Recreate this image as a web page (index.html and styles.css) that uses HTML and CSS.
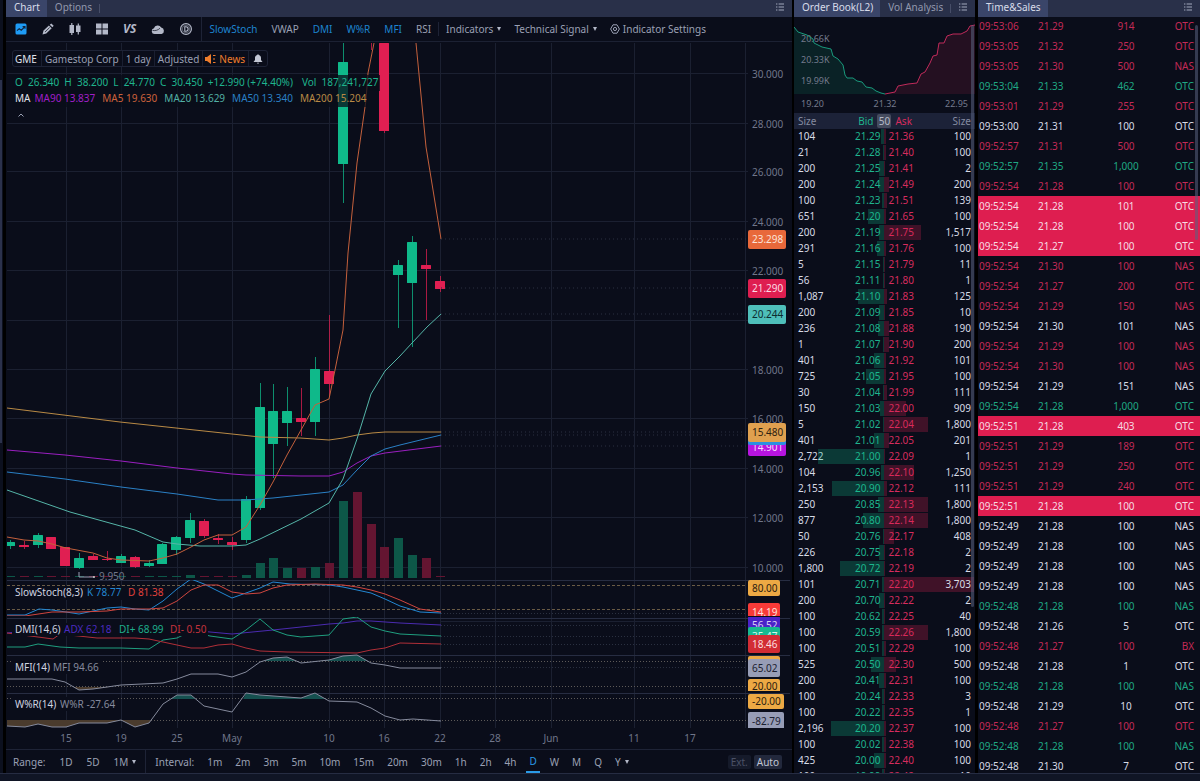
FILE: index.html
```html
<!DOCTYPE html>
<html lang="en">
<head>
<meta charset="utf-8">
<title>GME - Chart</title>
<link rel="stylesheet" href="styles.css">
</head>
<body>
<div class="app">
  <div class="rail"><span class="rail-thumb"></span></div>

  <main class="panel chart-panel">
    <nav class="tabs">
      <button class="tab active">Chart</button>
      <button class="tab">Options</button>
      <span class="tab-sep"></span>
      <button class="list-btn" aria-label="Menu"><svg viewBox="0 0 8 8"><path d="M0 1h1.4M0 4h1.4M0 7h1.4M2.6 1H8M2.6 4H8M2.6 7H8"/></svg></button>
    </nav>

    <div class="toolbar">
      <div class="tools">
        <button aria-label="Chart style"><svg viewBox="0 0 12 12"><rect x=".5" y=".5" width="11" height="11" rx="1.5" fill="#1e9bf5"/><path d="M2 7.6l2.2-2 2 1.6 3.6-3.4M7.6 3.6h2.4v2.2" stroke="#10243d" fill="none" stroke-width="1.1"/></svg></button>
        <button aria-label="Draw"><svg viewBox="0 0 12 12"><path d="M.5 11.500l1-4 5.400-5 2.800 2.700L4.300 10.600zM7.700 1.800L9.300.4l2.400 2.300-1.300 1.500z" fill="#b3b8c8"/><path d="M3 9l4.600-4.500" stroke="#0a0d1a" stroke-width=".7"/></svg></button>
        <button aria-label="Candles"><svg viewBox="0 0 12 12"><path d="M.5 2h4.500v8H.5zM2.200 0h1.200v12H2.200zM7 2.500h4.500v6.500H7zM8.700 .5h1.200v11H8.700z" fill="#b3b8c8"/></svg></button>
        <button aria-label="Layout"><svg viewBox="0 0 12 12"><path d="M0 .5h5.500v5H0zM6.500 .5H12v5H6.500zM0 6.500h5.500v5H0zM6.500 6.500H12v5H6.500z" fill="#b3b8c8"/></svg></button>
        <button class="vs">VS</button>
        <button class="cloud" aria-label="Cloud"><svg viewBox="0 0 14 12"><path d="M3.500 11a2.900 2.900 0 0 1-.6-5.700A4 4 0 0 1 10.200 4.600 3.300 3.300 0 0 1 10.600 11z" fill="#b3b8c8"/><path d="M1.500 7.400c3 .6 5.500-.2 7.500-2.200" stroke="#0a0d1a" fill="none" stroke-width=".7"/></svg></button>
        <button aria-label="Dividends"><svg viewBox="0 0 12 12" fill="none" stroke="#b3b8c8"><circle cx="6" cy="6" r="5.400" stroke-width="1.200"/><circle cx="6" cy="6" r="3.800" stroke-width=".5"/><path d="M4.800 3.800v4.400h1.100a2.200 2.200 0 0 0 0-4.400z" stroke-width="1.100"/></svg></button>
      </div>
      <div class="quick">
        <button class="on">SlowStoch</button><button>VWAP</button><button class="on">DMI</button><button class="on">W%R</button><button class="on">MFI</button><button>RSI</button>
      </div>
      <div class="menus">
        <button>Indicators<i class="caret"></i></button>
        <button>Technical Signal<i class="caret"></i></button>
        <button class="settings"><svg viewBox="0 0 10 10" fill="none" stroke="#9aa0b4"><path d="M3 .8h4L9.400 5 7 9.200H3L.6 5z"/><circle cx="5" cy="5" r="1.600"/></svg>Indicator Settings</button>
      </div>
    </div>

    <div class="chart">
      <svg class="plot" id="plot" viewBox="6 42 786 707" preserveAspectRatio="xMinYMin meet" role="img" aria-label="GME daily chart">
        <defs>
          <clipPath id="c-main"><rect x="7" y="43" width="785" height="537"/></clipPath>
          <clipPath id="c-k"><rect x="7" y="580" width="785" height="36"/></clipPath>
          <clipPath id="c-dmi"><rect x="7" y="617" width="785" height="38"/></clipPath>
          <clipPath id="c-mfi"><rect x="7" y="655" width="785" height="36"/></clipPath>
          <clipPath id="c-wr"><rect x="7" y="692" width="785" height="36"/></clipPath>
          <clipPath id="above-mfi"><rect x="7" y="655" width="440" height="6"/></clipPath>
          <clipPath id="below-mfi"><rect x="7" y="687" width="440" height="6"/></clipPath>
          <clipPath id="above-wr"><rect x="7" y="692" width="440" height="7"/></clipPath>
          <clipPath id="below-wr"><rect x="7" y="720" width="440" height="9"/></clipPath>
        </defs>
        <g id="grid" class="grid"></g>
        <g clip-path="url(#c-main)">
          <g id="volume"></g>
          <g id="candles"></g>
          <g class="lines">
            <polyline stroke="#b98a45" points="7,408 120,422 232,434 260,437 300,438 329,440 343,438 357,435 372,433 385,432 441,432"/>
            <polyline stroke="#9a1fc0" points="7,450 65,455 121,461 177,468 232,474 246,475 301,476 329,476 343,472 357,463 371,456 385,453 441,446"/>
            <polyline stroke="#2a80c5" points="7,472 65,479 121,487 177,494 218,500 246,500 273,498 301,495 329,492 343,485 357,470 371,456 385,449 400,445 441,435"/>
            <polyline stroke="#55b5a8" points="7,490 70,512 135,530 163,542 177,544 200,546 232,546 246,545 260,539 301,519 329,503 343,479 357,439 371,394 385,371 400,356 412,343 427,327 441,314"/>
            <polyline stroke="#c4603c" points="7,537 24,540 38,541 52,544 66,548 93,553 107,558 121,560 149,561 163,558 177,554 191,547 204,540 218,535 232,535 246,527 260,505 273,482 287,455 301,430 315,405 329,399 335,370 343,330 348,253 357,163 366,100 368,73 374,43"/>
            <polyline stroke="#c4603c" points="416,43 426,147 441,239"/>
            <path d="M79 572v5h15" stroke="#9aa0b4"/><circle cx="94" cy="577" r="1" fill="#ccc"/>
          </g>
          <text x="99" y="580" class="axis">9.950</text>
        </g>
        <g class="guides">
          <path d="M441 239H746M441 288H746M441 314H746M441 432H746M441 435H746M441 446H746" stroke="#2a3040" stroke-dasharray="1 3"/>
          <path d="M7 585.500H746M7 609.500H746" stroke="#6a5b45" stroke-dasharray="3 2"/>
          <path d="M7 661.500H746M7 686.500H746M7 698.500H746M7 720.500H746" stroke="#5d5a58" stroke-dasharray="1 2"/>
          <path d="M441 613.500H746M441 625.500H746M441 636.500H746M441 644.500H746M441 667.500H746" stroke="#2a3040" stroke-dasharray="1 2"/>
        </g>
        <g class="lines" clip-path="url(#c-k)">
          <polyline stroke="#2387d2" points="7,615 25,615 39,609 52,610 66,612 79,614 93,611 107,608 121,607 135,609 149,610 163,601 177,589 191,579 204,584 232,598 246,593 260,588 273,582 290,584 329,585 343,587 357,590 371,593 385,599 400,606 420,612 441,613"/>
          <polyline stroke="#d0463f" points="7,616 25,616 52,612 79,612 107,611 121,609 149,609 163,608 177,601 191,590 204,585 218,585 232,592 246,594 260,593 273,588 287,585 315,584 343,585 357,587 371,590 385,594 400,600 420,609 441,612"/>
        </g>
        <g class="lines" clip-path="url(#c-dmi)">
          <polyline stroke="#4a2bb0" points="7,633 60,627 140,625 210,632 232,634 273,630 301,627 329,624 343,623 357,621 371,621 400,623 441,625"/>
          <polyline stroke="#1f9e7f" points="7,647 25,647 38,644 60,647 79,648 121,648 149,649 163,640 177,638 191,631 210,636 232,639 246,630 260,619 273,630 287,635 301,637 329,635 343,619 357,617 371,627 385,631 400,634 441,636"/>
          <polyline stroke="#b02f38" points="7,633 38,637 53,639 60,634 97,638 135,638 149,639 177,645 191,648 204,648 218,645 232,644 246,648 260,651 287,652 357,653 371,650 385,648 400,643 441,644"/>
        </g>
        <g clip-path="url(#above-mfi)"><polygon class="fill-hi" points="7,691 260,662 273,658 287,657 301,663 329,660 343,656 357,655 371,663 441,691"/></g>
        <g clip-path="url(#below-mfi)"><polygon class="fill-lo" points="72,686 79,690 93,689 118,686"/></g>
        <g clip-path="url(#above-wr)"><polygon class="fill-hi" points="163,704 177,695 191,695 204,706 240,706 246,693 260,695 301,698 315,693 329,701"/></g>
        <g clip-path="url(#below-wr)"><polygon class="fill-lo" points="7,720 7,726 25,727 38,724 52,727 66,727 79,723 107,723 121,720 135,727 149,723 151,720"/></g>
        <g class="lines">
          <polyline stroke="#858a9c" points="7,679 52,679 65,682 79,690 93,689 121,685 163,683 177,679 191,674 218,674 232,677 246,672 260,662 273,658 287,657 301,663 329,660 343,656 357,655 371,663 385,665 400,668 441,668"/>
          <polyline stroke="#858a9c" points="7,726 25,727 38,724 52,727 66,727 79,723 107,723 121,720 135,727 149,723 163,704 177,695 191,695 204,706 232,712 246,693 260,695 301,698 315,693 329,701 357,702 371,708 385,716 400,720 413,719 441,721"/>
        </g>
        <g class="names">
          <rect x="12" y="586" width="152" height="14"/><rect x="12" y="623" width="196" height="13"/><rect x="12" y="660" width="90" height="14"/><rect x="12" y="697" width="104" height="14"/>
          <text x="15" y="596">SlowStoch(8,3)</text><text x="87" y="596" fill="#2387d2">K 78.77</text><text x="128" y="596" fill="#e0413c">D 81.38</text>
          <text x="15" y="633">DMI(14,6)</text><text x="64" y="633" fill="#4a2bc0">ADX 62.18</text><text x="119" y="633" fill="#1fae8b">DI+ 68.99</text><text x="170" y="633" fill="#c4323c">DI- 0.50</text>
          <text x="15" y="671">MFI(14)</text><text x="53" y="671" fill="#858a9c">MFI 94.66</text>
          <text x="15" y="708">W%R(14)</text><text x="60" y="708" fill="#858a9c">W%R -27.64</text>
        </g>
        <g id="labels" class="axis"></g>
        <g id="tags" class="tags"></g>
      </svg>

      <div class="legend">
        <div class="symbol">
          <span class="tick">GME</span><span>Gamestop Corp</span><span>1 day</span><span>Adjusted</span>
          <span class="news"><svg viewBox="0 0 12 10"><path d="M0 3h2l4-3v10L2 7H0z" fill="#ee7d2c"/><path d="M8 1.500h2.500M8 5h2M8 8.500h2.500" stroke="#ee7d2c" stroke-width="1"/></svg>News</span>
          <span class="bell"><svg viewBox="0 0 10 10"><path d="M5 0l.8.9C7.500 1.300 8 2.600 8 4v2l1.500 2h-9L2 6V4c0-1.400.5-2.700 2.200-3.100zM3.800 8.700h2.400L5 10z" fill="#c3c7d4"/></svg></span>
        </div>
        <div class="values up"><span>O&nbsp; 26.340</span><span>H&nbsp; 38.200</span><span>L&nbsp; 24.770</span><span>C&nbsp; 30.450</span><span>+12.990 (+74.40%)</span><span class="vol">Vol&nbsp; 187,241,727</span></div>
        <div class="values ma"><b>MA</b><span class="m90">MA90 13.837</span><span class="m5">MA5 19.630</span><span class="m20">MA20 13.629</span><span class="m50">MA50 13.340</span><span class="m200">MA200 15.204</span></div>
        <button class="fold" aria-label="Collapse"><svg viewBox="0 0 6 4"><path d="M.5 3.500L3 1l2.500 2.500" fill="none" stroke="#9aa0b4"/></svg></button>
      </div>
    </div>

    <div class="ranges">
      <div class="group first"><span>Range:</span><button>1D</button><button>5D</button><button>1M<i class="caret"></i></button></div>
      <div class="group"><span>Interval:</span><button>1m</button><button>2m</button><button>3m</button><button>5m</button><button>10m</button><button>15m</button><button>20m</button><button>30m</button><button>1h</button><button>2h</button><button>4h</button><button class="current">D</button><button>W</button><button>M</button><button>Q</button><button>Y<i class="caret"></i></button></div>
      <div class="modes"><button class="dim">Ext.</button><button>Auto</button></div>
    </div>
  </main>

  <section class="panel book">
    <nav class="tabs">
      <button class="tab active">Order Book(L2)</button>
      <button class="tab">Vol Analysis</button>
      <span class="tab-sep"></span>
      <button class="list-btn" aria-label="Menu"><svg viewBox="0 0 8 8"><path d="M0 1h1.400M0 4h1.400M0 7h1.400M2.600 1H8M2.600 4H8M2.600 7H8"/></svg></button>
    </nav>
    <svg class="depth" viewBox="794 17 181 96" role="img" aria-label="Depth">
      <polygon fill="#0a2226" points="794,94 794,27 798,32 807,35 813,39 814,43 822,47 831,49 833,56 838,59 843,65 845,75 847,78 853,78 857,81 862,82 866,87 872,88 876,91 881,93 885,94"/>
      <polygon fill="#241021" points="885,94 895,92 898,86 908,84 917,83 921,74 925,72 930,63 933,56 937,55 939,43 944,43 947,36 953,34 961,34 967,31 970,26 975,25 975,94"/>
      <g class="depth-text"><text x="801" y="42">20.66K</text><text x="801" y="63">20.33K</text><text x="801" y="84">19.99K</text><text x="801" y="107">19.20</text><text x="885" y="107" text-anchor="middle">21.32</text><text x="968" y="107" text-anchor="end">22.95</text></g>
      <polyline fill="none" stroke="#19997c" points="794,27 798,32 807,35 813,39 814,43 822,47 831,49 833,56 838,59 843,65 845,75 847,78 853,78 857,81 862,82 866,87 872,88 876,91 881,93 885,94"/>
      <polyline fill="none" stroke="#c02a5a" points="885,94 895,92 898,86 908,84 917,83 921,74 925,72 930,63 933,56 937,55 939,43 944,43 947,36 953,34 961,34 967,31 970,26 975,25"/>
    </svg>
    <div class="scroll">
      <table class="orders">
        <thead><tr><th class="size">Size</th><th class="bid">Bid</th><th class="ask"><span class="count">50</span>Ask</th><th class="size-r">Size</th></tr></thead>
        <tbody id="orders"></tbody>
      </table>
    </div>
    <span class="thumb"></span>
  </section>

  <section class="panel sales">
    <nav class="tabs">
      <button class="tab active">Time&amp;Sales</button>
      <button class="list-btn" aria-label="Menu"><svg viewBox="0 0 8 8"><path d="M0 1h1.400M0 4h1.400M0 7h1.400M2.600 1H8M2.600 4H8M2.600 7H8"/></svg></button>
    </nav>
    <div class="scroll"><table class="prints"><tbody id="prints"></tbody></table></div>
    <span class="thumb"></span>
  </section>

  <footer class="status"></footer>
</div>
<script src="data.js"></script>
</body>
</html>
```
FILE: styles.css
```css
* { box-sizing: border-box; }
body { margin: 0; background: #000; color: #d8dbe6; font: 10px/14px "Noto Sans", sans-serif; }
button { margin: 0; padding: 0; border: 0; background: none; color: inherit; font: inherit; white-space: nowrap; cursor: pointer; }
svg { display: block; }

.app { display: grid; grid-template-columns: 6px minmax(0, 788fr) minmax(0, 184fr) minmax(0, 222fr); grid-template-rows: minmax(0, 1fr) 8px; height: 100vh; overflow: hidden; }
.panel { position: relative; display: flex; flex-direction: column; min-height: 0; background: #0a0d1a; }
.rail { padding-top: 80px; border-right: 3px solid #000; background: #0c101e; }
.rail-thumb { display: block; width: 2px; height: 363px; background: #2b314b; }
.status { grid-column: 1 / -1; border-top: 1px solid #262c42; background: #101525; }

.tabs { display: flex; align-items: center; flex: none; height: 17px; overflow: hidden; background: #293049; color: #9298ad; }
.tab { height: 17px; padding: 0 7px 3px 8px; line-height: 14px; }
.tab.active { background: #3a4569; color: #d8dcea; }
.tab-sep { width: 1px; height: 9px; background: #474e68; }
.list-btn { margin-left: auto; padding: 0 8px 3px 0; }
.list-btn svg { width: 8px; height: 8px; stroke: #a2a8bd; }

.chart-panel { border-right: 2px solid #000; }
.toolbar { display: flex; align-items: center; flex: none; height: 25px; border-bottom: 1px solid #1c2133; color: #9aa0b4; }
.tools { display: flex; align-items: center; gap: 15px; height: 24px; padding: 0 9px; border-right: 1px solid #1e2336; }
.tools svg { width: 12px; height: 12px; }
.tools .cloud svg { width: 14px; }
.tools .vs { font-weight: 700; font-style: italic; font-size: 12px; color: #b3b8c8; }
.quick { display: flex; gap: 14px; padding: 0 7px; border-right: 1px solid #1e2336; }
.quick .on { color: #1d84cf; }
.menus { display: flex; gap: 13px; padding-left: 7px; }
.menus button { display: flex; align-items: center; }
.caret { display: inline-block; margin-left: 4px; border: 2px solid transparent; border-top: 4px solid #b3b8c8; border-bottom: 0; vertical-align: 2px; }
.settings svg { width: 10px; height: 10px; margin-right: 3px; }

.chart { position: relative; flex: 1; min-height: 0; overflow: hidden; }
.plot { width: 100%; }
.plot text { font-family: "Noto Sans", sans-serif; font-size: 10px; }
.plot .axis { fill: #70768a; }
.grid { stroke: #1b2031; }
.grid .split { stroke: #272d42; }
.lines { fill: none; stroke-width: 1; }
.guides { fill: none; }
.names rect { fill: #0a0d1a; }
.names { fill: #d0d4e0; }
.fill-hi { fill: #15504f; }
.fill-lo { fill: #4a3b2d; }

.legend { position: absolute; top: 8px; left: 6px; display: flex; flex-direction: column; align-items: flex-start; }
.symbol { display: flex; height: 17px; margin-bottom: 8px; border: 1px solid #1e2336; border-radius: 3px; background: #0a0d1a; color: #9aa0b4; }
.symbol > span { display: flex; align-items: center; padding: 0 3px; border-left: 1px solid #1a1f31; }
.symbol > .tick { padding: 0 4px 0 2px; border-left: 0; color: #e0e3ec; }
.symbol > .news { padding-left: 2px; color: #ee7d2c; }
.symbol .news svg { width: 12px; height: 10px; margin-right: 2px; }
.symbol > .bell { padding: 0 4px; }
.symbol .bell svg { width: 10px; height: 10px; }
.values { display: flex; gap: 5px; height: 16px; padding: 0 2px 0 3px; background: rgba(10, 13, 26, .75); white-space: nowrap; }
.up { color: #1fb48e; }
.vol { margin-left: 4px; }
.ma { gap: 7px; }
.ma b { margin-right: -3px; font-weight: 400; color: #e0e3ec; }
.m90 { color: #a01fc8; } .m5 { color: #cc623c; } .m20 { color: #52b0a4; } .m50 { color: #2a80c5; } .m200 { color: #b98a45; }
.fold { padding: 6px; }
.fold svg { width: 6px; height: 4px; }

.ranges { display: flex; align-items: center; flex: none; height: 24px; border-top: 1px solid #1e2336; color: #9aa0b4; }
.group { display: flex; align-items: center; gap: 13px; height: 23px; padding: 0 9px; }
.group.first { gap: 14px; padding: 0 9px 0 7px; border-right: 1px solid #1e2336; }
.group button { height: 23px; }
.group .current { padding: 0 3px; margin: 0 -3px; border-bottom: 2px solid #2a9be8; color: #2a9be8; }
.modes { display: flex; gap: 3px; margin-left: auto; padding-right: 10px; }
.modes button { padding: 0 3px; border-radius: 2px; background: #22283c; color: #c0c5d4; }
.modes .dim { background: #151a2a; color: #4b5166; }

.scroll { flex: 1; min-height: 0; overflow: hidden; }
table { width: 100%; border-collapse: collapse; table-layout: fixed; }
td, th { padding: 0; font-weight: 400; }

.book { border-right: 3px solid #000; }
.depth { flex: none; width: 100%; }
.depth-text { fill: #747a8c; font-size: 9px; }
.orders th { position: relative; height: 16px; background: #1c2238; color: #858ba0; }
.orders td { position: relative; height: 16px; padding-bottom: 2px; }
.orders .size { width: 24%; padding-left: 4px; text-align: left; }
.orders .bid { width: 26%; padding-right: 4px; color: #1fb48e; text-align: right; }
.orders th.bid { padding-right: 11px; }
.orders .ask { width: 26%; padding-left: 4px; color: #d62c5e; text-align: left; }
.orders th.ask { padding-left: 11px; }
.orders .size-r { width: 24%; padding-right: 4px; text-align: right; }
.count { position: absolute; top: 1px; left: -7px; width: 14px; border-radius: 2px; background: #454b5e; color: #b5bac8; text-align: center; }
.orders td.bid::before, .orders td.ask::before { content: ""; position: absolute; top: 0; width: var(--w); height: 15px; background: rgba(16, 190, 140, .25); }
.orders td.bid::before { right: 0; }
.orders td.ask::before { left: 0; background: rgba(226, 34, 84, .25); }

.prints { margin-top: -1px; }
.prints td { height: 20px; padding: 0 0 1px; }
.prints td:nth-child(1) { width: 60px; padding-left: 1px; }
.prints td:nth-child(2) { width: 44px; }
.prints td:nth-child(3) { text-align: center; }
.prints td:nth-child(4) { width: 30px; padding-right: 6px; text-align: right; }
.prints .d { color: #c32a57; }
.prints .u { color: #1fa884; }
.prints .n { color: #d8dbe6; }
.prints .hit { background: #de1e50; color: #f6dbe3; }

.thumb { position: absolute; top: 25px; width: 3px; border-radius: 2px; background: rgba(90, 98, 128, .55); }
.book .thumb { right: 1px; height: 582px; }
.sales .thumb { right: 2px; height: 215px; }
```
FILE: data.js
```js
const orders = `104 21.29 21.36 100
21 21.28 21.40 100
200 21.25 21.41 2
200 21.24 21.49 200
100 21.23 21.51 139
651 21.20 21.65 100
200 21.19 21.75 1,517
291 21.16 21.76 100
5 21.15 21.79 11
56 21.11 21.80 1
1,087 21.10 21.83 125
200 21.09 21.85 10
236 21.08 21.88 190
1 21.07 21.90 200
401 21.06 21.92 101
725 21.05 21.95 100
30 21.04 21.99 111
150 21.03 22.00 909
5 21.02 22.04 1,800
401 21.01 22.05 201
2,722 21.00 22.09 1
104 20.96 22.10 1,250
2,153 20.90 22.12 111
250 20.85 22.13 1,800
877 20.80 22.14 1,800
50 20.76 22.17 408
226 20.75 22.18 2
1,800 20.72 22.19 2
101 20.71 22.20 3,703
200 20.70 22.22 2
100 20.62 22.25 40
100 20.59 22.26 1,800
100 20.51 22.29 100
525 20.50 22.30 500
200 20.41 22.31 100
100 20.24 22.33 3
100 20.22 22.35 1
2,196 20.20 22.37 100
100 20.02 22.38 100
425 20.00 22.40 100
100 19.99 22.42 10`;

const barWidth = s => Math.max(1, Math.round(Number(s.replace(',', '')) * 0.0243));
document.getElementById('orders').innerHTML = orders.split('\n').map(line => {
  const [bs, b, a, as] = line.split(' ');
  return `<tr><td class="size">${bs}</td><td class="bid" style="--w:${barWidth(bs)}px">${b}</td>` +
    `<td class="ask" style="--w:${barWidth(as)}px">${a}</td><td class="size-r">${as}</td></tr>`;
}).join('');

/* d: down tick, u: up tick, n: unchanged, hit: highlighted block */
const prints = `d 06 21.29 914 OTC 53
d 05 21.32 250 OTC 53
d 05 21.30 500 NAS 53
u 04 21.33 462 OTC 53
d 01 21.29 255 OTC 53
n 00 21.31 100 OTC 53
d 57 21.31 500 OTC
u 57 21.35 1,000 OTC
d 54 21.28 100 OTC
hit 54 21.28 101 OTC
hit 54 21.28 100 OTC
hit 54 21.27 100 OTC
d 54 21.30 100 NAS
d 54 21.27 200 OTC
d 54 21.29 150 NAS
n 54 21.30 101 NAS
d 54 21.29 100 NAS
d 54 21.30 100 NAS
n 54 21.29 151 NAS
u 54 21.28 1,000 OTC
hit 51 21.28 403 OTC
d 51 21.29 189 OTC
d 51 21.29 250 OTC
d 51 21.29 240 OTC
hit 51 21.28 100 OTC
n 49 21.28 100 NAS
n 49 21.28 100 NAS
n 49 21.28 100 NAS
n 49 21.28 100 NAS
u 48 21.28 100 NAS
n 48 21.26 5 OTC
d 48 21.27 100 BX
n 48 21.28 1 OTC
u 48 21.28 100 NAS
n 48 21.29 10 OTC
d 48 21.27 100 OTC
u 48 21.28 100 NAS
n 48 21.30 7 OTC`;
document.getElementById('prints').innerHTML = prints.split('\n').map(line => {
  const [c, s, p, v, x, m = '52'] = line.split(' ');
  return `<tr class="${c}"><td>09:${m}:${s}</td><td>${p}</td><td>${v}</td><td>${x}</td></tr>`;
}).join('');

const UP = '#0fb98a', DOWN = '#e01f52';

/* direction, x, wick top, body top, body bottom, wick bottom, volume top */
const candles = [
  [1, 10, 540, 542, 546, 549, 576], [0, 24, 541, 545, 547, 549, 576], [1, 38, 533, 535, 545, 548, 576],
  [0, 51, 537, 537, 549, 549, 576], [0, 65, 547, 547, 566, 566, 576], [1, 79, 553, 558, 568, 569, 576],
  [0, 93, 554, 556, 560, 560, 576], [0, 107, 551, 559, 560, 561, 576], [1, 121, 554, 556, 563, 563, 576],
  [0, 135, 556, 557, 567, 568, 576], [1, 149, 560, 563, 566, 567, 576], [1, 162, 543, 544, 564, 564, 576],
  [1, 176, 536, 537, 550, 555, 576], [1, 190, 513, 520, 538, 543, 575], [0, 204, 519, 521, 536, 538, 576],
  [0, 218, 534, 538, 540, 544, 576], [0, 232, 537, 542, 545, 550, 576], [1, 246, 496, 499, 540, 543, 575],
  [1, 260, 383, 407, 508, 510, 563], [1, 273, 384, 411, 444, 478, 558], [1, 287, 387, 411, 423, 446, 568],
  [0, 301, 388, 418, 422, 436, 568], [1, 315, 357, 369, 422, 436, 567], [0, 329, 315, 371, 384, 397, 563],
  [1, 343, 43, 62, 164, 203, 501], [0, 357, 0, 0, 0, 0, 492], [0, 371, 43, 43, 43, 50, 524],
  [0, 384, 43, 43, 131, 133, 547], [1, 398, 260, 265, 275, 328, 538], [1, 412, 236, 242, 283, 347, 555],
  [0, 426, 249, 265, 269, 320, 558], [0, 440, 276, 281, 289, 292, 576]
];
const rect = (x, y, w, h, fill, extra = '') => `<rect x="${x}" y="${y}" width="${w}" height="${h}" fill="${fill}" ${extra}/>`;
document.getElementById('candles').innerHTML = candles.map(([up, x, wt, t, b, wb]) => {
  const c = up ? UP : DOWN;
  return rect(x, wt, 1, wb - wt, c, 'opacity=".75"') + (b > t ? rect(x - 5, t, 10, b - t, c, 'rx=".5"') : '');
}).join('');
/* the hottest days carry the tallest bars: volumeTop is measured from the pane's top */
document.getElementById('volume').innerHTML = candles.map(([up, x, , , , , v]) =>
  rect(x - 4, v, 9, v === 576 ? 1 : 578 - v, up ? '#0d5748' : '#641531')).join('');

const ticksX = [[66, '15'], [121, '19'], [177, '25'], [232, 'May'], [329, '10'], [384, '16'], [440, '22'], [495, '28'], [551, 'Jun'], [634, '11'], [690, '17'], [745, '']];
const ticksY = [[74, 30], [124, 28], [172, 26], [222, 24], [271, 22], [321, 0], [370, 18], [419, 16], [469, 14], [518, 12], [568, 10]];
document.getElementById('grid').innerHTML =
  ticksX.map(([x]) => `<path d="M${x}.5 43V728"/>`).join('') +
  ticksY.map(([y]) => `<path d="M7 ${y - 1}.5H748"/>`).join('') +
  [580, 618, 655, 693].map(y => `<path class="split" d="M7 ${y}.5H790"/>`).join('') +
  '<path d="M441 621.5H746"/>';
document.getElementById('labels').innerHTML =
  ticksX.map(([x, t]) => `<text x="${x}" y="742" text-anchor="middle">${t}</text>`).join('') +
  ticksY.filter(t => t[1]).map(([y, t]) => `<text x="752" y="${y + 4}">${t}.000</text>`).join('');

/* clip, center y, width, height, background, text colour, label */
const tags = [
  ['main', 239, 38, 19, '#e8683a', '#fbe3d8', '23.298'], ['main', 288, 38, 19, '#de1e50', '#fbdbe4', '21.290'],
  ['main', 314, 38, 19, '#4ebfba', '#0d2c30', '20.244'], ['main', 447, 38, 18, '#b714e0', '#f6dcfb', '14.901'],
  ['main', 436, 38, 18, '#2b8fe0', '#fff', ''], ['main', 432, 38, 19, '#dfa04f', '#2c2010', '15.480'],
  ['k', 588, 32, 16, '#eda944', '#2c2010', '80.00'], ['k', 612, 32, 18, '#f73a38', '#fde0df', '14.19'],
  ['dmi', 625, 32, 18, '#4a22c8', '#d9d0f6', '56.52'], ['dmi', 636, 32, 18, '#17b890', '#d8f4ec', '35.47'],
  ['dmi', 644, 32, 18, '#d22c34', '#fbdedf', '18.46'], ['mfi', 665, 32, 18, '#eda944', '#2c2010', ''],
  ['mfi', 668, 32, 18, '#979db6', '#1b2030', '65.02'], ['mfi', 686, 32, 15, '#eda944', '#2c2010', '20.00'],
  ['wr', 701, 36, 15, '#eda944', '#2c2010', '-20.00'], ['wr', 721, 36, 18, '#979db6', '#1b2030', '-82.79']
];
document.getElementById('tags').innerHTML = tags.map(([clip, y, w, h, bg, fg, t]) =>
  `<g clip-path="url(#c-${clip})">${rect(748, Math.round(y - h / 2), w, h, bg, 'rx="2"')}<text x="752" y="${y + 4}" fill="${fg}">${t}</text></g>`).join('');
```
